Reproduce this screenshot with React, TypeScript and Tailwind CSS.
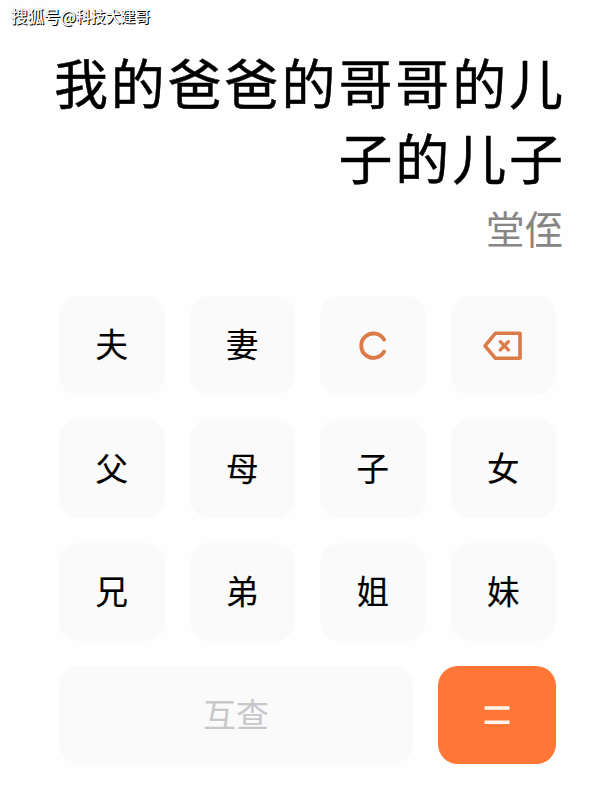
const relativeKeys = [
  "夫", "妻", "clear", "delete",
  "父", "母", "子", "女",
  "兄", "弟", "姐", "妹",
];

function ClearIcon() {
  return (
    <svg width="30" height="30" viewBox="0 0 30 30" fill="none" stroke="#dc7a48" strokeWidth="3.9" strokeLinecap="round" className="translate-x-px translate-y-px">
      <path d="M25 8.5A12.2 12.2 0 1 0 25 20.8" />
    </svg>
  );
}

function DeleteIcon() {
  return (
    <svg width="40" height="30" viewBox="0 0 40 30" fill="none" stroke="#dc7a48" strokeWidth="3.6" strokeLinejoin="round" className="-translate-x-px translate-y-px">
      <path d="M13.5 2.2H38V27.3H13.5L3 14.8Z" />
      <path d="M18.3 10.7L26.3 18.9M26.3 10.7L18.3 18.9" strokeLinecap="round" strokeWidth="3.3" />
    </svg>
  );
}

function Key({ name }: { name: string }) {
  return (
    <button className="flex items-center justify-center h-[98.5px] rounded-[20px] bg-[#fafafa] text-[32.5px] leading-none text-black [-webkit-text-stroke:0.2px_#000]">
      {name === "clear" ? <ClearIcon /> : name === "delete" ? <DeleteIcon /> : <span className="pb-[3.5px]">{name}</span>}
    </button>
  );
}

export default function App() {
  return (
    <div className="relative w-[600px] h-[800px] overflow-hidden bg-[#fefefe] font-['Noto_Sans_CJK_SC',sans-serif]">
      <div className="absolute left-[11px] top-[6px] flex items-center h-5 leading-5 whitespace-nowrap font-medium text-white [text-shadow:1px_1px_0_#000,0_0_1px_#0006]">
        <span className="text-[16.5px]">搜狐号</span>
        <span className="text-[16px]">@</span>
        <span className="text-[14.8px]">科技犬建哥</span>
      </div>

      <div className="pt-[44px] pr-[34px] text-right">
        <h1 className="text-[54px] leading-[75px] tracking-[2.9px] text-black [-webkit-text-stroke:0.5px_#000]">
          我的爸爸的哥哥的儿
          <br />
          子的儿子
        </h1>
        <p className="mt-[5px] mr-[3px] text-[38.5px] leading-[56px] text-[#868686]">堂侄</p>
      </div>

      <div className="mt-[41px] ml-[59px] w-[497px]">
        <div className="grid grid-cols-4 gap-x-[25px] gap-y-[24.9px]">
          {relativeKeys.map((name) => (
            <Key key={name} name={name} />
          ))}
        </div>
        <div className="mt-[24.7px] flex gap-[25px]">
          <button className="flex-1 h-[98.5px] pb-[3px] rounded-[20px] bg-[#fafafa] text-[33px] leading-none text-[#c8c8cb]">互查</button>
          <button className="flex items-center justify-center w-[118px] h-[98.5px] rounded-[20px] bg-[#ff7637]">
            <svg width="28" height="22" viewBox="0 0 28 22" stroke="#fff6ed" strokeWidth="3.6">
              <path d="M1.5 4H26.5M1.5 18.3H26.5" />
            </svg>
          </button>
        </div>
      </div>
    </div>
  );
}
